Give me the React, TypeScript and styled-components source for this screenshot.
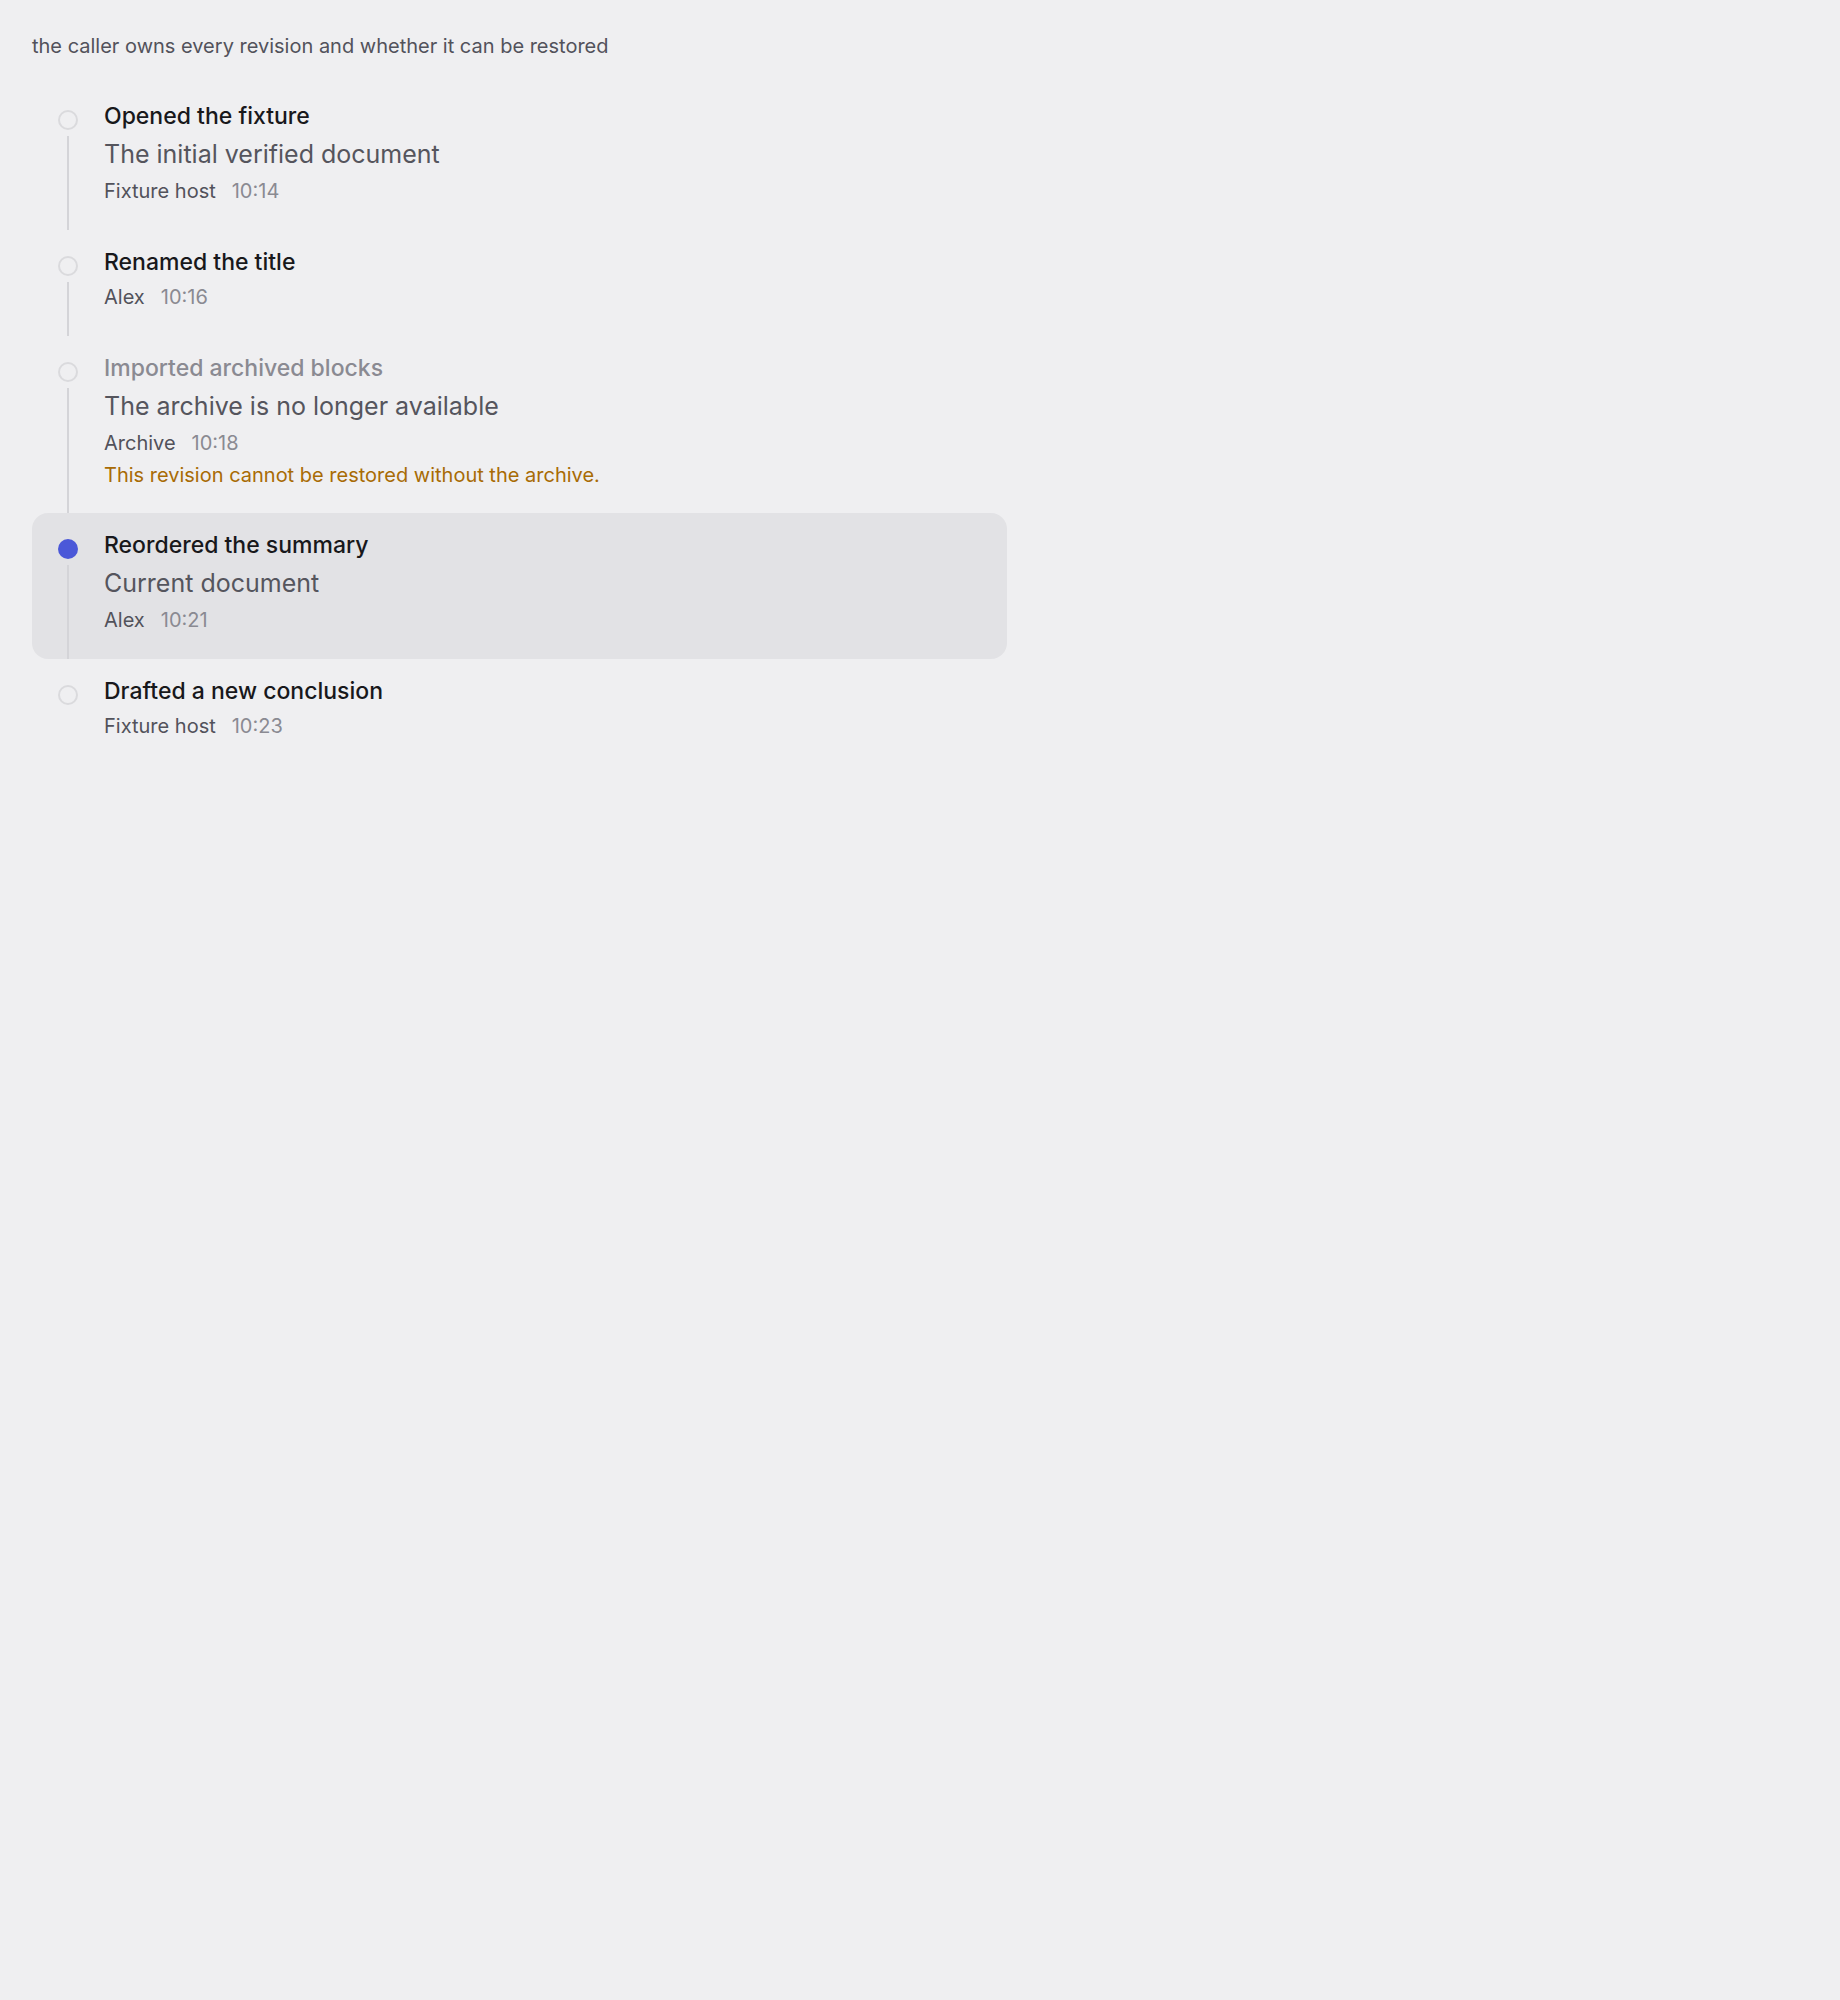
import { createGlobalStyle } from "styled-components";
import styled from "styled-components";

const GlobalStyle = createGlobalStyle`
  html, body {
    margin: 0;
    padding: 0;
    background: #efeff1;
  }
  body {
    min-height: 2000px;
    font-family: Inter, "Noto Sans", "Liberation Sans", sans-serif;
    -webkit-font-smoothing: antialiased;
  }
`;

const Page = styled.main`
  padding: 34px 32px;
`;

const Subtitle = styled.p`
  margin: 0;
  font-size: 20px;
  line-height: 24px;
  color: #52525b;
`;

const Timeline = styled.ol`
  list-style: none;
  margin: 26px 0 0;
  padding: 0;
  width: 975px;
`;

const Item = styled.li<{ $current?: boolean }>`
  display: grid;
  grid-template-columns: 72px 1fr;
  border-radius: 16px;
  background: ${(p) => (p.$current ? "#e2e2e5" : "transparent")};
`;

const Rail = styled.div`
  display: flex;
  flex-direction: column;
  align-items: center;
  padding-top: 26px;
`;

const Dot = styled.span<{ $current?: boolean }>`
  box-sizing: border-box;
  width: 20px;
  height: 20px;
  border-radius: 50%;
  flex: none;
  border: ${(p) => (p.$current ? "none" : "2px solid #dadadd")};
  background: ${(p) => (p.$current ? "#4b58d8" : "transparent")};
`;

const Line = styled.span`
  flex: 1;
  width: 2px;
  margin-top: 6px;
  background: #d4d4d8;
`;

const Content = styled.div`
  padding: 18px 0 26px;
  display: flex;
  flex-direction: column;
`;

const Title = styled.h3<{ $muted?: boolean }>`
  margin: 0;
  font-size: 23px;
  line-height: 28px;
  font-weight: 500;
  color: ${(p) => (p.$muted ? "#8a8a92" : "#18181b")};
`;

const Description = styled.p`
  margin: 8px 0 0;
  font-size: 25px;
  line-height: 32px;
  color: #55555d;
`;

const Meta = styled.div`
  margin-top: 8px;
  display: flex;
  gap: 16px;
  font-size: 20px;
  line-height: 26px;
`;

const Author = styled.span`
  color: #52525b;
`;

const Time = styled.span`
  color: #8a8a92;
`;

const Warning = styled.p`
  margin: 7px 0 0;
  font-size: 20px;
  line-height: 24px;
  color: #a86b05;
`;

interface Revision {
  id: string;
  title: string;
  description?: string;
  author: string;
  time: string;
  unavailable?: boolean;
  warning?: string;
  current?: boolean;
}

const revisions: Revision[] = [
  { id: "r1", title: "Opened the fixture", description: "The initial verified document", author: "Fixture host", time: "10:14" },
  { id: "r2", title: "Renamed the title", author: "Alex", time: "10:16" },
  {
    id: "r3",
    title: "Imported archived blocks",
    description: "The archive is no longer available",
    author: "Archive",
    time: "10:18",
    unavailable: true,
    warning: "This revision cannot be restored without the archive.",
  },
  { id: "r4", title: "Reordered the summary", description: "Current document", author: "Alex", time: "10:21", current: true },
  { id: "r5", title: "Drafted a new conclusion", author: "Fixture host", time: "10:23" },
];

export default function App() {
  return (
    <>
      <GlobalStyle />
      <Page>
        <Subtitle>the caller owns every revision and whether it can be restored</Subtitle>
        <Timeline>
          {revisions.map((r, i) => (
            <Item key={r.id} $current={r.current}>
              <Rail>
                <Dot $current={r.current} />
                {i < revisions.length - 1 && <Line />}
              </Rail>
              <Content>
                <Title $muted={r.unavailable}>{r.title}</Title>
                {r.description && <Description>{r.description}</Description>}
                <Meta>
                  <Author>{r.author}</Author>
                  <Time>{r.time}</Time>
                </Meta>
                {r.warning && <Warning>{r.warning}</Warning>}
              </Content>
            </Item>
          ))}
        </Timeline>
      </Page>
    </>
  );
}
